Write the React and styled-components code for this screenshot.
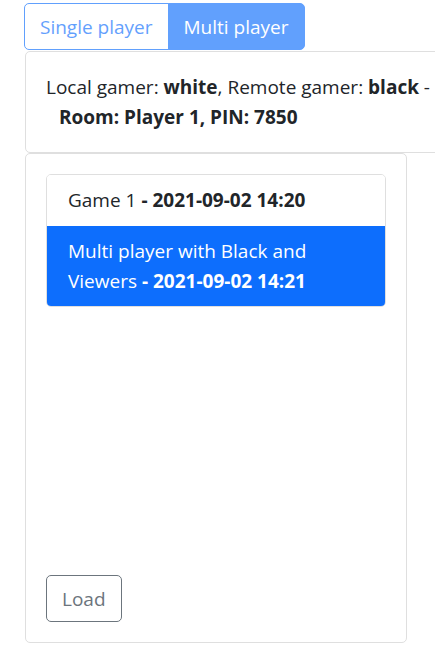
import React from 'react';
import styled, { createGlobalStyle } from 'styled-components';

const Global = createGlobalStyle`
  body {
    margin: 0;
    background: #fff;
    overflow: hidden;
    font-family: 'Open Sans', 'Noto Sans', sans-serif;
    font-size: 19px;
    line-height: 30px;
    color: #212529;
  }
  * { box-sizing: border-box; }
`;

const Page = styled.div`
  width: 435px;
  height: 653px;
  padding-top: 3px;
  display: flex;
  flex-direction: column;
  overflow: hidden;
`;

const TabGroup = styled.div`
  display: flex;
  margin-left: 24px;
  margin-bottom: 1px;
  opacity: 0.65;
`;

const Tab = styled.button`
  font: inherit;
  height: 47px;
  padding: 0 15px;
  border: 1px solid #0d6efd;
  background: ${p => (p.active ? '#0d6efd' : '#fff')};
  color: ${p => (p.active ? '#fff' : '#0d6efd')};
  border-radius: ${p => (p.first ? '5px 0 0 5px' : '0 5px 5px 0')};
  margin-left: ${p => (p.first ? '0' : '-1px')};
`;

const Panel = styled.div`
  margin-left: 25px;
  width: 430px;
  flex-shrink: 0;
  border: 1px solid #dfdfdf;
  border-radius: 5px;
  padding: 20px;
  white-space: nowrap;
`;

const RoomLine = styled.div`
  padding-left: 13px;
  font-weight: 700;
`;

const Warn = styled.span`
  color: #ffc107;
`;

const Card = styled.div`
  margin-left: 25px;
  width: 382px;
  height: 490px;
  flex-shrink: 0;
  border: 1px solid #dfdfdf;
  border-radius: 5px;
  padding: 20px;
  display: flex;
  flex-direction: column;
`;

const List = styled.div`
  border: 1px solid #dfdfdf;
  border-radius: 5px;
  overflow: hidden;
`;

const Item = styled.div`
  padding: ${p => (p.active ? '10px 21px' : '10px 21px 11px')};
  background: ${p => (p.active ? '#0d6efd' : '#fff')};
  color: ${p => (p.active ? '#fff' : '#212529')};
`;

const LoadButton = styled.button`
  margin-top: auto;
  align-self: flex-start;
  font: inherit;
  height: 47px;
  padding: 0 15px;
  border: 1px solid #6c757d;
  border-radius: 5px;
  background: #fff;
  color: #6c757d;
`;

export default function App() {
  return (
    <Page>
      <Global />
      <TabGroup>
        <Tab first>Single player</Tab>
        <Tab active>Multi player</Tab>
      </TabGroup>
      <Panel>
        <div>
          Local gamer: <b>white</b>, Remote gamer: <b>black</b> - <Warn>●</Warn>
        </div>
        <RoomLine>Room: Player 1, PIN: 7850</RoomLine>
      </Panel>
      <Card>
        <List>
          <Item>
            Game 1 <b>- 2021-09-02 14:20</b>
          </Item>
          <Item active>
            Multi player with Black and Viewers <b>- 2021-09-02 14:21</b>
          </Item>
        </List>
        <LoadButton>Load</LoadButton>
      </Card>
    </Page>
  );
}
